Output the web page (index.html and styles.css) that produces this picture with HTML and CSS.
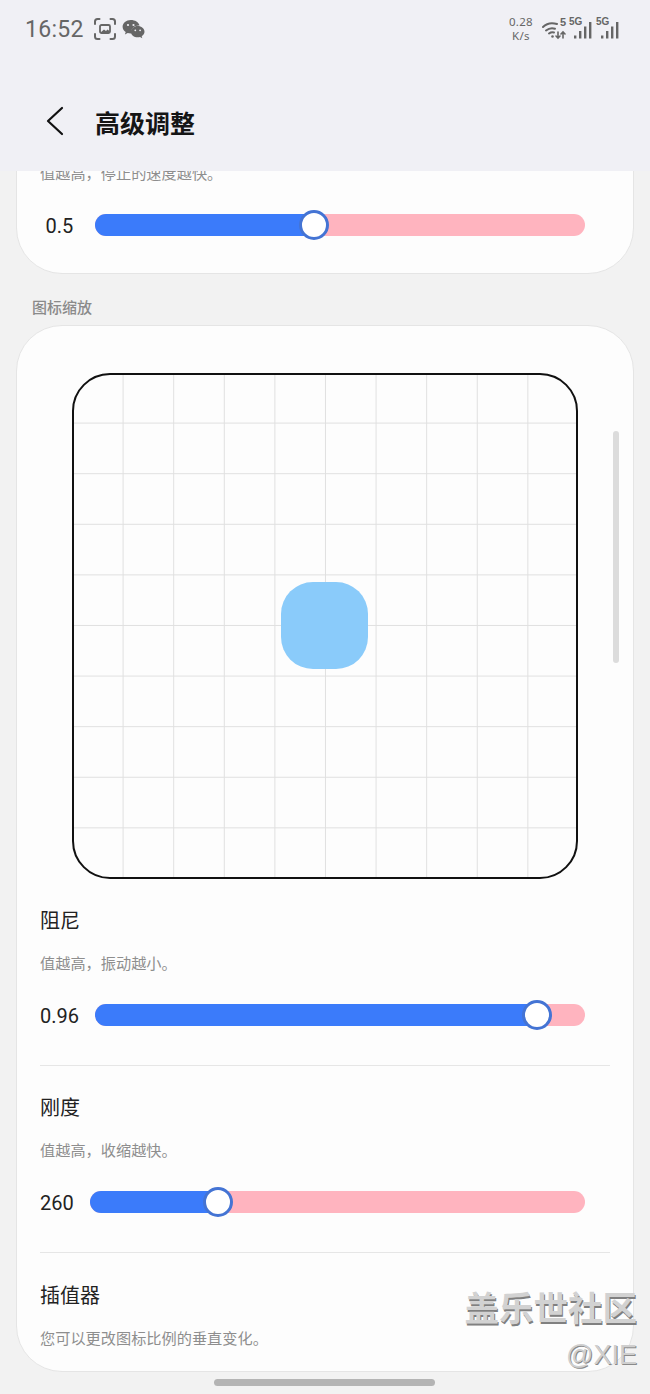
FILE: index.html
```html
<!DOCTYPE html>
<html lang="zh-CN">
<head>
    <meta charset="UTF-8">
    <meta name="viewport" content="width=device-width, initial-scale=1.0">
    <title>高级调整</title>
    <link rel="stylesheet" href="styles.css">
</head>
<body>
    <div class="top-area">
        <div class="status-bar">
            <div class="status-left">
                <span class="clock">16:52</span>
                <!-- screenshot notification -->
                <svg class="icon-shot" width="24" height="24" viewBox="0 0 24 24" fill="none" stroke="#666" stroke-width="2" stroke-linecap="round">
                    <path d="M2 7V4.500A2.500 2.500 0 0 1 4.500 2H6.500M17.500 2h2A2.500 2.500 0 0 1 22 4.500V7M22 17v2.500a2.500 2.500 0 0 1-2.500 2.500h-2M6.500 22h-2A2.500 2.500 0 0 1 2 19.500V17"/>
                    <rect x="7" y="8" width="10" height="8" rx="1.500" stroke-width="1.800"/>
                    <path d="M7.500 15.500l3.500-3 2 1.500 1.500-1.500 2 1.500v1.500z" fill="#666" stroke="none"/>
                </svg>
                <!-- wechat notification -->
                <svg class="icon-wechat" width="23" height="21" viewBox="0 0 23 21">
                    <path d="M8.800 1C4.200 1 .6 4 .6 7.800c0 2.200 1.200 4 3.100 5.300l-.8 2.400 2.800-1.400c1 .3 2 .5 3.100.5h.8a6 6 0 0 1-.3-1.900c0-3.500 3.300-6.300 7.500-6.300h.7C16.700 3.100 13.100 1 8.800 1z" fill="#666"/>
                    <path d="M22.500 12.700c0-3.100-3.100-5.600-6.800-5.600s-6.800 2.500-6.800 5.600 3.100 5.600 6.800 5.600c.8 0 1.600-.1 2.300-.3l2.300 1.200-.6-2c1.700-1.100 2.800-2.700 2.800-4.500z" fill="#666"/>
                    <circle cx="6" cy="6" r="1.100" fill="#f0f0f5"/>
                    <circle cx="11.500" cy="6" r="1.100" fill="#f0f0f5"/>
                    <circle cx="13.300" cy="11.300" r=".9" fill="#f0f0f5"/>
                    <circle cx="18.100" cy="11.300" r=".9" fill="#f0f0f5"/>
                </svg>
            </div>
            <div class="status-right">
                <div class="net-speed"><span>0.28</span><span>K/s</span></div>
                <div class="wifi">
                    <svg width="24" height="20" viewBox="0 0 24 20" fill="none" stroke="#666" stroke-linecap="round">
                        <path d="M1 7C4.500 3.500 10 2.500 15 4" stroke-width="2"/>
                        <path d="M4 10.500c2.500-2 6-2.800 9-1.800" stroke-width="2"/>
                        <path d="M7 13.500c1.500-1.100 3.500-1.500 5-1" stroke-width="2"/>
                        <path d="M16 12v6M14 16l2 2 2-2" stroke-width="1.600"/>
                        <path d="M21 18v-6M19 14l2-2 2 2" stroke-width="1.600"/>
                        <circle cx="10.500" cy="16.500" r="1.300" fill="#666" stroke="none"/>
                    </svg>
                    <span class="wifi-gen">5</span>
                </div>
                <div class="signal">
                    <span class="signal-gen">5G</span>
                    <svg width="24" height="20" viewBox="0 0 24 20" fill="#666">
                        <rect x="5" y="15.500" width="2.400" height="3"/>
                        <rect x="10" y="11" width="2.400" height="7.500"/>
                        <rect x="15" y="6.500" width="2.400" height="12"/>
                        <rect x="20" y="2" width="2.400" height="16.500"/>
                    </svg>
                </div>
                <div class="signal">
                    <span class="signal-gen">5G</span>
                    <svg width="24" height="20" viewBox="0 0 24 20" fill="#666">
                        <rect x="5" y="15.500" width="2.400" height="3"/>
                        <rect x="10" y="11" width="2.400" height="7.500"/>
                        <rect x="15" y="6.500" width="2.400" height="12"/>
                        <rect x="20" y="2" width="2.400" height="16.500"/>
                    </svg>
                </div>
            </div>
        </div>
        <div class="app-bar">
            <svg class="back" width="18" height="30" viewBox="0 0 18 30" fill="none" stroke="#111" stroke-width="2.200" stroke-linecap="round" stroke-linejoin="round">
                <path d="M16 2L2 15l14 13"/>
            </svg>
            <h1 class="page-title">高级调整</h1>
        </div>
    </div>

    <div class="scroll-area">
        <div class="card card-clipped">
            <p class="hint">值越高，停止的速度越快。</p>
            <div class="slider-row">
                <span class="value">0.5</span>
                <div class="track"><div class="fill" style="width: 44.7%"><span class="thumb"></span></div></div>
            </div>
        </div>

        <div class="section-label">图标缩放</div>

        <div class="card card-main">
            <div class="grid-box">
                <div class="shape"></div>
            </div>

            <div class="option-title">阻尼</div>
            <p class="hint">值越高，振动越小。</p>
            <div class="slider-row">
                <span class="value">0.96</span>
                <div class="track"><div class="fill" style="width: 90.2%"><span class="thumb"></span></div></div>
            </div>
            <div class="divider"></div>

            <div class="option-title tight-top">刚度</div>
            <p class="hint">值越高，收缩越快。</p>
            <div class="slider-row">
                <span class="value short">260</span>
                <div class="track"><div class="fill" style="width: 25.9%"><span class="thumb"></span></div></div>
            </div>
            <div class="divider"></div>

            <div class="option-title">插值器</div>
            <p class="hint">您可以更改图标比例的垂直变化。</p>

            <div class="scrollbar"></div>
        </div>
    </div>

    <div class="home-bar"></div>

    <div class="watermark">
        <div class="wm-name">盖乐世社区</div>
        <div class="wm-user">@XIE</div>
    </div>
</body>
</html>
```

FILE: styles.css
```css
*{
    margin: 0;
    padding: 0;
    box-sizing: border-box;
    font-family: "Noto Sans", "Noto Sans CJK SC", sans-serif;
}
body{
    position: relative;
    width: 650px;
    height: 1394px;
    overflow: hidden;
    display: flex;
    flex-direction: column;
    background: #f2f2f2;
}

/* status bar + title */
.top-area{
    height: 171px;
    flex-shrink: 0;
    background: #f0f0f5;
}
.status-bar{
    height: 58px;
    display: flex;
    justify-content: space-between;
    align-items: center;
    padding: 0 30px 0 25px;
}
.status-left{
    display: flex;
    align-items: center;
}
.clock{
    font-family: Roboto, sans-serif;
    font-size: 23px;
    letter-spacing: .3px;
    color: #666;
}
.icon-shot{
    margin-left: 9px;
}
.icon-wechat{
    margin-left: 5px;
}
.status-right{
    display: flex;
    align-items: center;
}
.net-speed{
    display: flex;
    flex-direction: column;
    align-items: center;
    gap: 1.500px;
    width: 26px;
    font-family: Roboto, sans-serif;
    font-size: 11.500px;
    letter-spacing: .3px;
    line-height: 12px;
    color: #666;
}
.wifi{
    position: relative;
    width: 24px;
    height: 20px;
    margin-left: 8px;
    margin-top: 2px;
}
.wifi-gen{
    position: absolute;
    top: -4px;
    right: 0;
    font-family: "Liberation Sans", sans-serif;
    font-size: 11px;
    font-weight: 700;
    color: #666;
}
.signal{
    position: relative;
    width: 24px;
    height: 20px;
    margin-left: 3px;
    margin-top: 2px;
}
.signal-gen{
    position: absolute;
    top: -4px;
    left: 0;
    font-family: "Liberation Sans", sans-serif;
    font-size: 10px;
    font-weight: 700;
    color: #666;
}
.app-bar{
    height: 113px;
    display: flex;
    align-items: center;
    padding: 14px 0 0 46px;
}
.back{
    margin-bottom: 2px;
}
.page-title{
    margin-left: 31px;
    font-size: 25px;
    line-height: 32px;
    font-weight: 700;
    color: #151515;
    font-family: "Noto Sans CJK SC", sans-serif;
}

/* scrolled content, first card runs under the title */
.scroll-area{
    flex: 1;
    overflow: hidden;
}
.card{
    margin: 0 16px;
    padding: 0 23px;
    background: #fdfdfd;
    border: 1px solid #e5e5e5;
    border-radius: 46px;
}
.card-clipped{
    margin-top: -60px;
    padding-top: 50px;
    padding-bottom: 33px;
}
.card-main{
    position: relative;
    height: 1047px;
    padding-top: 47px;
}
.section-label{
    margin: 23px 0 8px 32px;
    font-size: 15px;
    line-height: 20px;
    font-weight: 500;
    color: #8a8a8a;
    font-family: "Noto Sans CJK SC", sans-serif;
}
.hint{
    font-size: 15.200px;
    line-height: 20px;
    color: #8e8e8e;
    font-family: "Noto Sans CJK SC", sans-serif;
}
.option-title{
    margin-top: 27px;
    margin-bottom: 17px;
    font-size: 20px;
    line-height: 30px;
    color: #222;
    font-family: "Noto Sans CJK SC", sans-serif;
}
.option-title.tight-top{
    margin-top: 26px;
}
.slider-row{
    display: flex;
    align-items: center;
    height: 30px;
    margin-top: 28px;
}
.value{
    min-width: 39px;
    margin-right: 16px;
    padding-top: 1px;
    text-align: center;
    font-family: Roboto, sans-serif;
    font-size: 20px;
    color: #222;
}
.value.short{
    min-width: 0;
}
.track{
    flex: 1;
    height: 22px;
    margin-right: 25px;
    background: #ffb4bf;
    border-radius: 11px;
}
.fill{
    position: relative;
    height: 100%;
    background: #3b7bfa;
    border-radius: 11px 0 0 11px;
}
.thumb{
    position: absolute;
    right: -15px;
    top: -4px;
    width: 30px;
    height: 30px;
    background: #fff;
    border: 3px solid #4474d4;
    border-radius: 50%;
}
.divider{
    height: 1px;
    margin-top: 35px;
    background: #e6e6e6;
}

/* preview box with 10x10 grid */
.grid-box{
    display: flex;
    justify-content: center;
    align-items: center;
    width: 506px;
    height: 506px;
    margin: 0 0 -1px 32px;
    border: 2px solid #111;
    border-radius: 38px;
    background-color: #fdfdfd;
    background-image:
        linear-gradient(to right, transparent 49.600px, #e0e0e0 49.600px),
        linear-gradient(to bottom, transparent 49.600px, #e0e0e0 49.600px);
    background-size: 50.600px 50.600px;
    background-position: 1px 0, 0 0;
    background-origin: border-box;
}
.shape{
    width: 87px;
    height: 87px;
    margin: 0 2px 2px 0;
    background: #8acbfa;
    border-radius: 32px;
}
.scrollbar{
    position: absolute;
    top: 105px;
    right: 14px;
    width: 6px;
    height: 232px;
    background: #dcdcdc;
    border-radius: 3px;
}

.home-bar{
    position: absolute;
    left: 214px;
    bottom: 8px;
    width: 221px;
    height: 7px;
    background: #b4b4b4;
    border-radius: 4px;
}

/* community watermark */
.watermark{
    position: absolute;
    right: 13px;
    top: 1284px;
    text-align: right;
    color: #d2d2d2;
    text-shadow: 1px 2px 0 #808080;
}
.wm-name{
    font-size: 34.500px;
    line-height: 44px;
    font-weight: 700;
    font-family: "Noto Sans CJK SC", sans-serif;
}
.wm-user{
    margin-top: 7px;
    font-size: 27px;
    line-height: 40px;
    font-family: "Liberation Sans", sans-serif;
    color: #cfcfcf;
    text-shadow: 1px 1px 0 #8a8a8a;
}
```
